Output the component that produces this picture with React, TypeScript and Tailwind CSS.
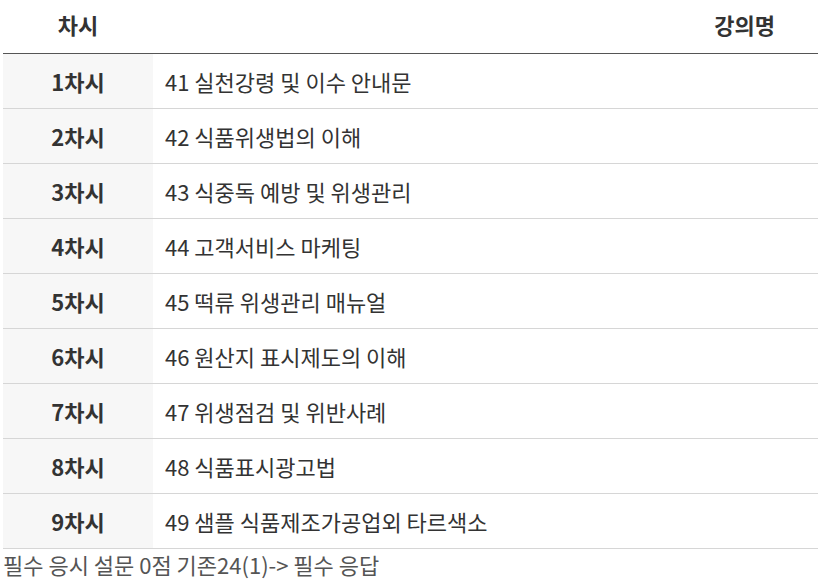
import * as React from 'react';

const rows = [
  ['1차시', '41 실천강령 및 이수 안내문'],
  ['2차시', '42 식품위생법의 이해'],
  ['3차시', '43 식중독 예방 및 위생관리'],
  ['4차시', '44 고객서비스 마케팅'],
  ['5차시', '45 떡류 위생관리 매뉴얼'],
  ['6차시', '46 원산지 표시제도의 이해'],
  ['7차시', '47 위생점검 및 위반사례'],
  ['8차시', '48 식품표시광고법'],
  ['9차시', '49 샘플 식품제조가공업외 타르색소'],
];

const App: React.FunctionComponent = () => {
  return (
    <div className="w-[818px] h-[581px] overflow-hidden bg-white font-['Noto_Sans_CJK_KR','Noto_Sans',sans-serif] text-[#333]">
      <div className="ml-[3px]">
        <div className="flex h-[54px] border-b border-[#555] text-[22px] font-bold">
          <div className="w-[150px] flex items-center justify-center pb-[4px]">차시</div>
          <div className="flex-1 flex items-center justify-end pr-[43px] pb-[4px]">강의명</div>
        </div>
        {rows.map((r) => (
          <div key={r[0]} className="flex h-[55px] border-b border-[#d6d6d6] text-[22px]">
            <div className="w-[150px] bg-[#f7f7f7] flex items-center justify-center font-bold">{r[0]}</div>
            <div className="flex-1 flex items-center pl-[12px]">{r[1]}</div>
          </div>
        ))}
      </div>
      <p className="ml-[3px] text-[22px] leading-[30px] text-[#555]">필수 응시 설문 0점 기존24(1)-&gt; 필수 응답</p>
    </div>
  );
};

export default App;
